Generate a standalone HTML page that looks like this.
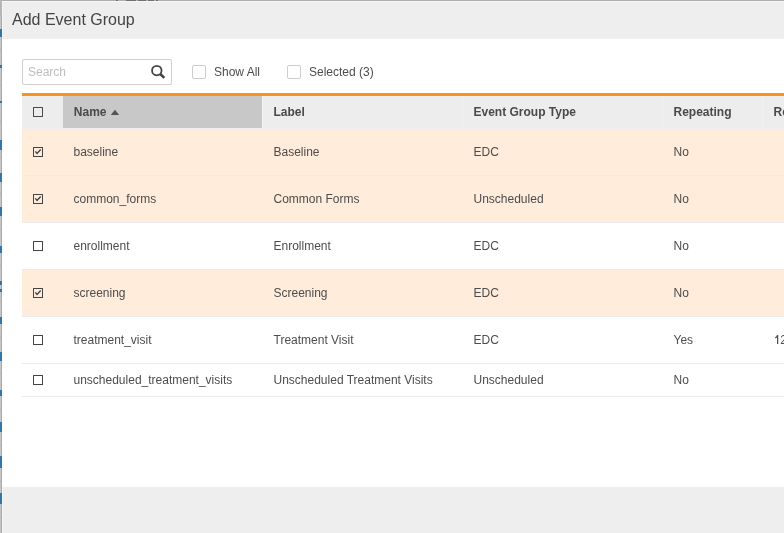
<!DOCTYPE html>
<html><head><meta charset="utf-8">
<style>
*{box-sizing:border-box;}
html,body{margin:0;padding:0;}
body{width:784px;height:533px;overflow:hidden;position:relative;background:#c6c6c6;font-family:"Liberation Sans",sans-serif;}
#bg{position:absolute;left:0;top:0;width:784px;height:533px;}
.bl{position:absolute;left:0;width:1.6px;background:#2f76ad;}
.tk{position:absolute;left:0;width:2px;height:1px;background:#b0b0b0;}
#vline{position:absolute;left:1px;top:0;width:1px;height:533px;background:#a9a9a9;}
#topstrip{position:absolute;left:0;top:0;width:784px;height:1px;background:#aeaeae;}
#modal{position:absolute;left:2px;top:1px;width:820px;height:560px;background:#fff;will-change:transform;}
#hdr{position:absolute;left:0;top:0;width:820px;height:38px;background:#eeeeee;border-left:1px solid #f6f6f6;border-top:1px solid #f6f6f6;}
#title{position:absolute;left:9px;top:9px;font-size:16px;line-height:18px;color:#444;white-space:nowrap;}
#ftr{position:absolute;left:0;top:486px;width:820px;height:80px;background:#eeeeee;border-left:1px solid #f6f6f6;}
#search{position:absolute;left:20px;top:58px;width:150px;height:26px;border:1px solid #cfcfcf;border-radius:2px;background:#fff;}
#search span{position:absolute;left:5px;top:5px;font-size:12px;line-height:14px;color:#bebebe;}
#search svg{position:absolute;left:124px;top:2px;}
.cb{position:absolute;width:14px;height:14px;border:1px solid #cccccc;border-radius:2px;background:#fff;}
.lbl{position:absolute;font-size:12px;line-height:14px;color:#4d4d4d;white-space:nowrap;}
#orange{position:absolute;left:20px;top:92px;width:800px;height:3px;background:#f7931e;}
#thead{position:absolute;left:20px;top:95px;width:800px;height:33px;background:#ededed;border-bottom:1px solid #eeeeee;}
.th{position:absolute;top:0;height:32px;font-size:12px;font-weight:bold;color:#4a4a4a;line-height:14px;}
.th span{position:absolute;top:9px;white-space:nowrap;}
.row{position:absolute;left:20px;width:800px;height:47px;border-bottom:1px solid #ececec;background:#fff;}
.row.sel{background:#ffecdb;}
.cell{position:absolute;font-size:12px;line-height:14px;color:#4d4d4d;white-space:nowrap;}
.rcb{position:absolute;left:11px;width:10px;height:10px;border:1.2px solid #444;border-radius:0.5px;}
.rcb svg{position:absolute;left:-1.2px;top:-1.2px;}
</style></head><body>
<div id="bg">
  <div id="topstrip"></div>
  <div id="vline"></div>
  <div class="bl" style="top:29px;height:8px;"></div>
  <div class="bl" style="top:65px;height:3px;"></div>
  <div class="bl" style="top:101px;height:2px;"></div>
  <div class="bl" style="top:140px;height:10px;"></div>
  <div class="bl" style="top:173px;height:9px;"></div>
  <div class="bl" style="top:207px;height:9px;"></div>
  <div class="bl" style="top:246px;height:7px;"></div>
  <div class="bl" style="top:281px;height:4px;"></div>
  <div class="bl" style="top:289px;height:3px;"></div>
  <div class="bl" style="top:317px;height:7px;"></div>
  <div class="bl" style="top:352px;height:9px;"></div>
  <div class="bl" style="top:390px;height:6px;"></div>
  <div class="bl" style="top:422px;height:10px;"></div>
  <div class="bl" style="top:456px;height:12px;"></div>
  <div class="bl" style="top:493px;height:11px;"></div>
  <div id="topdark" style="position:absolute;left:0;top:0;width:2px;height:16px;background:#b6b6b6;"></div>
  <div class="tk" style="top:49px;"></div>
  <div class="tk" style="top:85px;"></div>
  <div class="tk" style="top:121px;"></div>
  <div class="tk" style="top:157px;"></div>
  <div class="tk" style="top:193px;"></div>
  <div class="tk" style="top:229px;"></div>
  <div class="tk" style="top:265px;"></div>
  <div class="tk" style="top:301px;"></div>
  <div class="tk" style="top:337px;"></div>
  <div class="tk" style="top:373px;"></div>
  <div class="tk" style="top:409px;"></div>
  <div class="tk" style="top:445px;"></div>
  <div class="tk" style="top:481px;"></div>
  <div class="tk" style="top:517px;"></div>
  <div style="position:absolute;top:0;left:116px;width:2px;height:1px;background:#707070;"></div>
  <div style="position:absolute;top:0;left:126px;width:10px;height:1px;background:#707070;"></div>
  <div style="position:absolute;top:0;left:138px;width:8px;height:1px;background:#707070;"></div>
  <div style="position:absolute;top:0;left:148px;width:6px;height:1px;background:#707070;"></div>
  <div style="position:absolute;top:0;left:156px;width:2px;height:1px;background:#707070;"></div>

</div>
<div id="modal">
  <div id="ftr"></div>
  <div id="hdr"><div id="title">Add Event Group</div></div>
  <div id="search"><span>Search</span>
    <svg width="20" height="20" viewBox="0 0 20 20"><circle cx="9.8" cy="8.6" r="4.75" fill="none" stroke="#444" stroke-width="1.8"/><line x1="13" y1="11.8" x2="17.3" y2="15.9" stroke="#444" stroke-width="2.6"/></svg>
  </div>
  <div class="cb" style="left:190px;top:64px;"></div>
  <div class="lbl" style="left:212px;top:64px;">Show All</div>
  <div class="cb" style="left:285px;top:64px;"></div>
  <div class="lbl" style="left:307px;top:64px;">Selected (3)</div>
  <div id="orange"></div>
  <div id="thead">
    <div class="th" style="left:0;width:41px;"><div class="rcb" style="top:11px;left:11px;border-color:#4a4a4a;"></div></div>
    <div class="th" style="left:41px;width:199px;background:#c8c8c8;border-left:0;"><span style="left:10.8px;">Name</span><svg width="9" height="7" viewBox="0 0 9 7" style="position:absolute;left:48px;top:13px;"><path d="M-0.1 5.9 L4.0 0.85 L8.1 5.9Z" fill="#555"/></svg></div>
    <div class="th" style="left:240px;width:200px;border-left:1px solid #f5f5f5;"><span style="left:10.5px;">Label</span></div>
    <div class="th" style="left:440px;width:200px;border-left:1px solid #f1f1f1;"><span style="left:10.5px;">Event Group Type</span></div>
    <div class="th" style="left:640px;width:100px;border-left:1px solid #f1f1f1;"><span style="left:10.5px;">Repeating</span></div>
    <div class="th" style="left:740px;width:100px;border-left:1px solid #f1f1f1;"><span style="left:10.5px;">Repeat</span></div>
  </div>
  <!-- rows -->
  <div class="row sel" style="top:128px;height:47px;"><div class="rcb" style="top:18px;"><svg width="10" height="10" viewBox="0 0 10 10"><path d="M2.3 4.4 L4.05 6.4 L7.7 2.5" fill="none" stroke="#444" stroke-width="1.4"/></svg></div><div class="cell" style="left:51.5px;top:16px;">baseline</div><div class="cell" style="left:251.5px;top:16px;">Baseline</div><div class="cell" style="left:451.5px;top:16px;">EDC</div><div class="cell" style="left:651.5px;top:16px;">No</div><div class="cell" style="left:751.5px;top:16px;"></div></div>
  <div class="row sel" style="top:175px;height:47px;"><div class="rcb" style="top:18px;"><svg width="10" height="10" viewBox="0 0 10 10"><path d="M2.3 4.4 L4.05 6.4 L7.7 2.5" fill="none" stroke="#444" stroke-width="1.4"/></svg></div><div class="cell" style="left:51.5px;top:16px;">common_forms</div><div class="cell" style="left:251.5px;top:16px;">Common Forms</div><div class="cell" style="left:451.5px;top:16px;">Unscheduled</div><div class="cell" style="left:651.5px;top:16px;">No</div><div class="cell" style="left:751.5px;top:16px;"></div></div>
  <div class="row" style="top:222px;height:47px;"><div class="rcb" style="top:18px;"></div><div class="cell" style="left:51.5px;top:16px;">enrollment</div><div class="cell" style="left:251.5px;top:16px;">Enrollment</div><div class="cell" style="left:451.5px;top:16px;">EDC</div><div class="cell" style="left:651.5px;top:16px;">No</div><div class="cell" style="left:751.5px;top:16px;"></div></div>
  <div class="row sel" style="top:269px;height:47px;"><div class="rcb" style="top:18px;"><svg width="10" height="10" viewBox="0 0 10 10"><path d="M2.3 4.4 L4.05 6.4 L7.7 2.5" fill="none" stroke="#444" stroke-width="1.4"/></svg></div><div class="cell" style="left:51.5px;top:16px;">screening</div><div class="cell" style="left:251.5px;top:16px;">Screening</div><div class="cell" style="left:451.5px;top:16px;">EDC</div><div class="cell" style="left:651.5px;top:16px;">No</div><div class="cell" style="left:751.5px;top:16px;"></div></div>
  <div class="row" style="top:316px;height:47px;"><div class="rcb" style="top:18px;"></div><div class="cell" style="left:51.5px;top:16px;">treatment_visit</div><div class="cell" style="left:251.5px;top:16px;">Treatment Visit</div><div class="cell" style="left:451.5px;top:16px;">EDC</div><div class="cell" style="left:651.5px;top:16px;">Yes</div><div class="cell" style="left:751.5px;top:16px;"><svg width="7" height="14" viewBox="0 0 7 14" style="position:absolute;left:0;top:0"><path d="M3.6 2.1 V11" stroke="#4d4d4d" stroke-width="1.25" fill="none"/><path d="M1.1 5.0 Q2.9 4.4 3.6 2.3" stroke="#4d4d4d" stroke-width="1.2" fill="none"/></svg><span style="visibility:hidden">1</span>2</div></div>
  <div class="row" style="top:363px;height:33px;"><div class="rcb" style="top:11px;"></div><div class="cell" style="left:51.5px;top:9px;">unscheduled_treatment_visits</div><div class="cell" style="left:251.5px;top:9px;">Unscheduled Treatment Visits</div><div class="cell" style="left:451.5px;top:9px;">Unscheduled</div><div class="cell" style="left:651.5px;top:9px;">No</div><div class="cell" style="left:751.5px;top:9px;"></div></div>
</div>
</body></html>
